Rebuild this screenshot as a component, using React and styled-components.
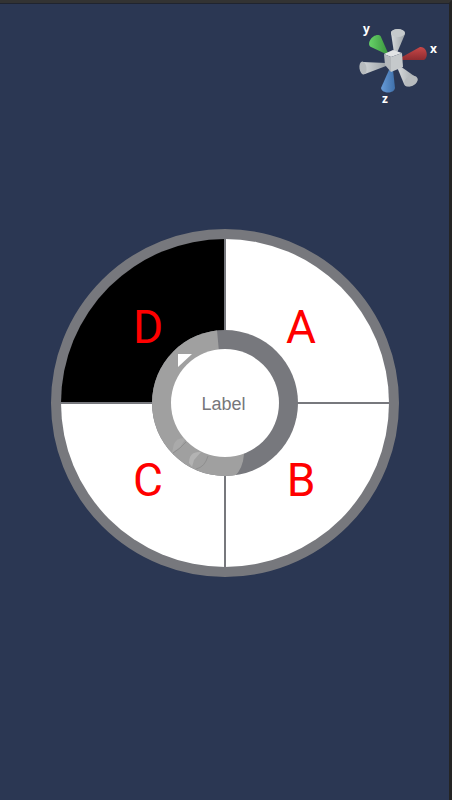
import React, { useState } from 'react';
import styled, { createGlobalStyle } from 'styled-components';

const GlobalStyle = createGlobalStyle`
  * { box-sizing: border-box; }
  body { margin: 0; background: #2b3753; }
`;

const Viewport = styled.main`
  position: relative;
  display: grid;
  place-items: center;
  min-height: 100vh;
  padding: 3px 0 0;
  border-top: 3px solid #333333;
  border-right: 3px solid #242424;
  background: #2b3753;
  box-shadow: inset 0 1px #20242f;
  font-family: Roboto, "Liberation Sans", sans-serif;
`;

const Gizmo = styled.svg`
  position: absolute;
  top: 16px;
  right: 8px;
  width: 90px;
  height: 90px;
  font: 700 12px "Open Sans", sans-serif;
`;

const Wheel = styled.div`
  position: relative;
  display: grid;
  grid-template-columns: 1fr 1fr;
  grid-template-rows: 1fr 1fr;
  gap: 2px;
  width: min(348px, 90vw);
  aspect-ratio: 1;
  border: 10px solid #77787d;
  border-radius: 50%;
  background: #77787d;
  overflow: hidden;
`;

const Sector = styled.button`
  display: grid;
  place-items: center;
  border: 0;
  padding: ${({ $pad }) => $pad};
  background: ${({ $active }) => ($active ? '#000' : '#fff')};
  color: #ff0000;
  font-family: inherit;
  font-size: 46px;
  line-height: 48px;
  font-weight: 400;
  cursor: pointer;
`;

const Hub = styled.div`
  position: absolute;
  inset: 0;
  margin: auto;
  display: grid;
  place-items: center;
  width: 146px;
  height: 146px;
`;

const Ring = styled.svg`
  grid-area: 1 / 1;
  width: 146px;
  height: 146px;
`;

const HubLabel = styled.span`
  grid-area: 1 / 1;
  z-index: 1;
  padding: 2px 2px 0 0;
  color: #77777a;
  font: 400 18px/20px "Liberation Sans", sans-serif;
`;

const sectors = [
  { name: 'D', pad: '12px 0 0 12px' },
  { name: 'A', pad: '12px 12px 0 0' },
  { name: 'C', pad: '0 0 12px 12px' },
  { name: 'B', pad: '0 12px 12px 0' },
];

function AxisGizmo() {
  return (
    <Gizmo viewBox="0 0 90 90" role="img" aria-label="Scene orientation">
      <defs>
        <linearGradient id="pale"><stop stopColor="#d8dbdd" /><stop offset="1" stopColor="#9da3a7" /></linearGradient>
        <linearGradient id="green"><stop stopColor="#67d268" /><stop offset="1" stopColor="#3b963e" /></linearGradient>
        <linearGradient id="blue"><stop stopColor="#679bd8" /><stop offset="1" stopColor="#3f70aa" /></linearGradient>
        <linearGradient id="red" x2="0" y2="1"><stop stopColor="#c84848" /><stop offset="1" stopColor="#8e2b30" /></linearGradient>
      </defs>
      <path d="M35 35 20 28C15 25 21 15 28 16Q30 17 30 18L37 34Z" fill="url(#green)" />
      <path d="M43 34 40 14C40 9 54 9 54 15L46 34Z" fill="url(#pale)" />
      <ellipse cx="47" cy="14" rx="7" ry="4" fill="#c6cacc" />
      <path d="M51 38 69 28C76 27 78 38 73 41L51 41Z" fill="url(#red)" />
      <path d="M35 44 12 43C7 44 9 56 14 55L35 47Z" fill="url(#pale)" />
      <ellipse cx="12" cy="49" rx="3.500" ry="6.500" transform="rotate(-8 12 49)" fill="#b7bbbe" />
      <path d="M38 51 30 69C31 75 43 75 44 69L42 51Z" fill="url(#blue)" />
      <path d="M46 48 53 65C56 72 69 63 66 59L49 47Z" fill="url(#pale)" />
      <ellipse cx="60" cy="62" rx="7" ry="5" transform="rotate(-25 60 62)" fill="#b7bbbe" />
      <path d="M33 35 42 31 51 34 40 38Z" fill="#e2e4e5" />
      <path d="M33 35 40 38 40 53 34 46Z" fill="#b4b8bb" />
      <path d="M40 38 51 34 52 48 40 53Z" fill="#c5c9cb" />
      <g fill="#fff">
        <text x="12" y="14">y</text>
        <text x="79" y="34">x</text>
        <text x="31" y="84">z</text>
      </g>
    </Gizmo>
  );
}

export default function App() {
  const [active, setActive] = useState('D');
  return (
    <Viewport>
      <GlobalStyle />
      <AxisGizmo />
      <Wheel>
        {sectors.map(({ name, pad }) => (
          <Sector key={name} type="button" $pad={pad} $active={active === name} onClick={() => setActive(name)}>
            {name}
          </Sector>
        ))}
        <Hub>
          <Ring viewBox="0 0 146 146" aria-hidden="true">
            <defs>
              <clipPath id="disc"><circle cx="73" cy="73" r="73" /></clipPath>
            </defs>
            <circle cx="73" cy="73" r="73" fill="#77787d" />
            <path d="M65 0H0V146H83Q91 138 92 124L67 22Z" fill="#a0a0a0" clipPath="url(#disc)" />
            <path d="M22 114Q25 107 34 108L28 117Q24 120 20 123Z" fill="#aaa" />
            <path d="M37 133Q37 121 49 122L42 130 40 137Z" fill="#b3b3b3" />
            <path d="M21 123Q28 119 34 112M56 126Q53 137 44 139" fill="none" stroke="#8f8f8f" />
            <circle cx="73" cy="73" r="54" fill="#fff" />
            <path d="M26 24H40L26 37Z" fill="#fff" />
          </Ring>
          <HubLabel>Label</HubLabel>
        </Hub>
      </Wheel>
    </Viewport>
  );
}
